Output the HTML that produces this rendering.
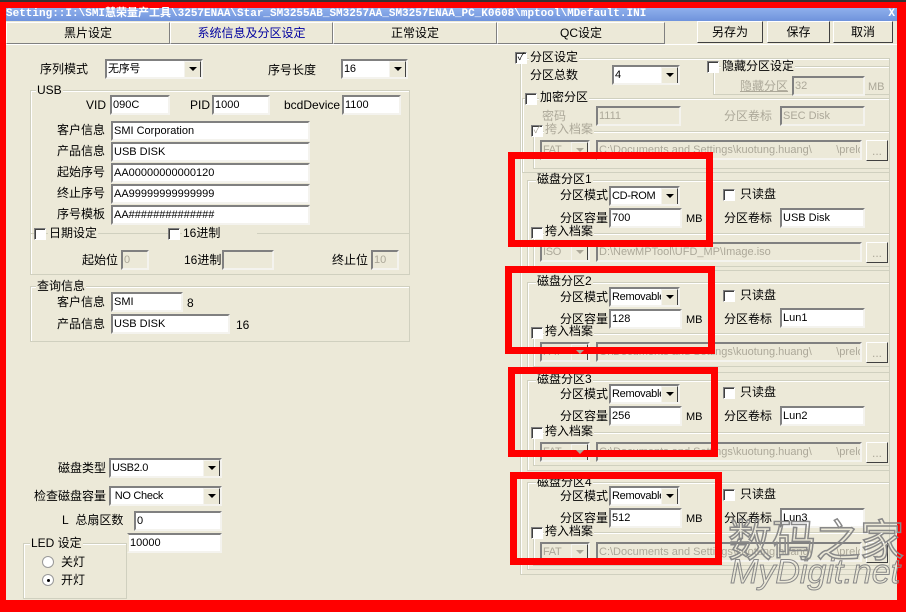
<!DOCTYPE html>
<html><head><meta charset="utf-8">
<style>
*{margin:0;padding:0;box-sizing:border-box}
body{width:906px;height:612px;background:#f00;position:relative;overflow:hidden;font-family:"Liberation Sans","Noto Sans CJK SC",sans-serif;font-size:12px;color:#000}
.a{position:absolute;white-space:nowrap;line-height:14px}
.win{position:absolute;left:6px;top:8px;width:891px;height:592px;background:#ece9d8}
.tb{position:absolute;left:6px;top:8px;width:891px;height:13px;background:linear-gradient(#8fb0ec,#6f93dc);color:#fff;font-family:"Liberation Mono","Noto Sans CJK SC",monospace;font-size:11px;line-height:13px;font-weight:bold;padding-left:0}
.tab{position:absolute;top:22px;height:22px;background:#ece9d8;border:1px solid;border-color:#fff #808080 #808080 #fff;text-align:center;line-height:20px;font-size:12px}
.btn{position:absolute;top:21px;height:22px;background:#ece9d8;border:1px solid;border-color:#fff #404040 #404040 #fff;text-align:center;line-height:20px}
.t{position:absolute;height:20px;background:#fff;border:2px solid;border-color:#808080 #f4f3ee #f4f3ee #808080;font-size:11px;line-height:16px;padding-left:1px;white-space:nowrap;overflow:hidden}
.d{background:#ece9d8;color:#aca899}
.c{position:absolute;height:20px;background:#fff;border:2px solid;border-color:#808080 #f4f3ee #f4f3ee #808080;font-size:11px;line-height:16px;padding-left:1px;white-space:nowrap;overflow:hidden;letter-spacing:-0.3px}
.c::after{content:"";position:absolute;right:0;top:0;width:15px;height:16px;background:#ece9d8;border:1px solid;border-color:#f4f3ee #404040 #404040 #f4f3ee}
.c i{position:absolute;right:4px;top:6px;width:0;height:0;border-left:4px solid transparent;border-right:4px solid transparent;border-top:4px solid #000;z-index:2}
.cd{background:#ece9d8;color:#aca899}
.cd i{border-top-color:#aca899}
.g{position:absolute;border:1px solid #d0d0bf;box-shadow:inset 1px 1px 0 #fff}
.gl{position:absolute;background:#ece9d8;padding:0 1px;line-height:12px;white-space:nowrap}
.cb{position:absolute;width:12px;height:12px;background:#fff;border:1px solid;border-color:#808080 #fff #fff #808080;box-shadow:inset 1px 1px 0 #404040;font-size:10px;line-height:10px;text-align:center}
.rb{position:absolute;width:12px;height:12px;border-radius:50%;background:#fff;border:1px solid #999}
.red{position:absolute;border:7px solid #f00}
.dis{color:#aca899}
.wm{position:absolute;color:transparent;-webkit-text-stroke:1px #fff;white-space:nowrap}
</style></head><body>
<div style="position:absolute;left:0;top:0;width:906px;height:2px;background:#333"></div>
<div class="win"></div>
<div class="tb">Setting::I:\SMI慧荣量产工具\3257ENAA\Star_SM3255AB_SM3257AA_SM3257ENAA_PC_K0608\mptool\MDefault.INI<span style="position:absolute;right:2px">X</span></div>
<div class="tab" style="left:6px;width:164px">黑片设定</div>
<div class="tab" style="left:170px;width:163px;color:#0000a0">系统信息及分区设定</div>
<div class="tab" style="left:333px;width:164px">正常设定</div>
<div class="tab" style="left:497px;width:168px">QC设定</div>
<div class="btn" style="left:697px;width:66px">另存为</div>
<div class="btn" style="left:767px;width:63px">保存</div>
<div class="btn" style="left:833px;width:60px">取消</div>
<div style="position:absolute;left:6px;top:44px;width:891px;height:1px;background:#fff"></div>

<!-- left -->
<div class="a" style="left:40px;top:62px">序列模式</div>
<div class="c" style="left:105px;top:59px;width:98px">无序号<i></i></div>
<div class="a" style="left:268px;top:63px">序号长度</div>
<div class="c" style="left:341px;top:59px;width:67px">16<i></i></div>

<div class="g" style="left:30px;top:90px;width:380px;height:185px"></div>
<div class="gl" style="left:36px;top:84px">USB</div>
<div class="a" style="left:86px;top:98px">VID</div>
<div class="t" style="left:110px;top:95px;width:60px">090C</div>
<div class="a" style="left:190px;top:98px">PID</div>
<div class="t" style="left:212px;top:95px;width:58px">1000</div>
<div class="a" style="left:284px;top:98px">bcdDevice</div>
<div class="t" style="left:342px;top:95px;width:59px">1100</div>
<div class="a" style="left:57px;top:123px">客户信息</div>
<div class="t" style="left:111px;top:121px;width:199px">SMI Corporation</div>
<div class="a" style="left:57px;top:144px">产品信息</div>
<div class="t" style="left:111px;top:142px;width:199px">USB DISK</div>
<div class="a" style="left:57px;top:165px">起始序号</div>
<div class="t" style="left:111px;top:163px;width:199px">AA00000000000120</div>
<div class="a" style="left:57px;top:186px">终止序号</div>
<div class="t" style="left:111px;top:184px;width:199px">AA99999999999999</div>
<div class="a" style="left:57px;top:207px">序号模板</div>
<div class="t" style="left:111px;top:205px;width:199px">AA##############</div>
<div style="position:absolute;left:31px;top:233px;width:378px;height:1px;background:#d0d0bf"></div>
<div class="cb" style="left:34px;top:228px"></div><div class="gl" style="left:48px;top:227px">日期设定</div>
<div class="cb" style="left:168px;top:228px"></div><div class="gl" style="left:182px;top:227px;width:75px">16进制</div>
<div class="a" style="left:82px;top:253px">起始位</div>
<div class="t d" style="left:121px;top:250px;width:28px">0</div>
<div class="a" style="left:184px;top:253px">16进制</div>
<div class="t d" style="left:222px;top:250px;width:52px"></div>
<div class="a" style="left:332px;top:253px">终止位</div>
<div class="t d" style="left:371px;top:250px;width:28px">10</div>

<div class="g" style="left:30px;top:286px;width:380px;height:56px"></div>
<div class="gl" style="left:36px;top:280px">查询信息</div>
<div class="a" style="left:57px;top:295px">客户信息</div>
<div class="t" style="left:111px;top:292px;width:72px">SMI</div>
<div class="a" style="left:187px;top:296px">8</div>
<div class="a" style="left:57px;top:317px">产品信息</div>
<div class="t" style="left:111px;top:314px;width:119px">USB DISK</div>
<div class="a" style="left:236px;top:318px">16</div>

<div class="a" style="left:58px;top:461px">磁盘类型</div>
<div class="c" style="left:109px;top:458px;width:113px">USB2.0<i></i></div>
<div class="a" style="left:34px;top:489px">检查磁盘容量</div>
<div class="c" style="left:109px;top:486px;width:113px">&nbsp;NO Check<i></i></div>
<div class="a" style="left:62px;top:513px">L&nbsp;&nbsp;总扇区数</div>
<div class="t" style="left:134px;top:511px;width:88px">0</div>
<div class="t" style="left:127px;top:533px;width:95px;border-color:#808080 #f4f3ee #f4f3ee #ece9d8">10000</div>
<div class="g" style="left:23px;top:543px;width:104px;height:56px"></div>
<div class="gl" style="left:30px;top:537px">LED 设定</div>
<div class="rb" style="left:42px;top:556px"></div><div class="a" style="left:61px;top:555px">关灯</div>
<div class="rb" style="left:42px;top:574px"></div><div style="position:absolute;left:47px;top:579px;width:3px;height:3px;background:#000;border-radius:50%"></div><div class="a" style="left:61px;top:573px">开灯</div>

<!-- right -->
<div class="g" style="left:520px;top:58px;width:370px;height:517px"></div>
<div class="cb" style="left:515px;top:52px">✓</div><div class="gl" style="left:529px;top:51px">分区设定</div>
<div class="a" style="left:530px;top:68px">分区总数</div>
<div class="c" style="left:612px;top:65px;width:68px">4<i></i></div>
<div class="g" style="left:713px;top:66px;width:177px;height:29px"></div>
<div class="cb" style="left:707px;top:61px"></div><div class="gl" style="left:721px;top:60px">隐藏分区设定</div>
<div class="a dis" style="left:740px;top:79px;text-decoration:underline">隐藏分区</div>
<div class="t d" style="left:792px;top:76px;width:73px">32</div>
<div class="a dis" style="left:868px;top:80px;font-size:11px">MB</div>

<div class="g" style="left:522px;top:98px;width:368px;height:75px"></div>
<div class="cb" style="left:525px;top:93px"></div><div class="gl" style="left:539px;top:91px">加密分区</div>
<div class="a dis" style="left:542px;top:109px">密码</div>
<div class="t d" style="left:596px;top:106px;width:85px">1111</div>
<div class="a dis" style="left:724px;top:109px">分区卷标</div>
<div class="t d" style="left:780px;top:106px;width:85px">SEC Disk</div>
<div class="g" style="left:533px;top:131px;width:357px;height:38px"></div>
<div class="cb" style="left:531px;top:125px;color:#aca899">✓</div><div class="gl dis" style="left:544px;top:123px">挎入档案</div>
<div class="c cd" style="left:540px;top:140px;width:50px">FAT<i></i></div>
<div class="t d" style="left:596px;top:140px;width:266px">C:\Documents and Settings\kuotung.huang\ &nbsp;&nbsp;&nbsp;&nbsp;&nbsp;&nbsp;&nbsp;\preload</div>
<div class="btn" style="left:866px;top:140px;width:22px;height:21px;color:#aca899">...</div>

<!-- partitions -->
<div class="g" style="left:527px;top:180px;width:363px;height:91px"></div>
<div class="gl" style="left:536px;top:173px">磁盘分区1</div>
<div class="a" style="left:560px;top:188px">分区模式</div>
<div class="c" style="left:609px;top:186px;width:71px">CD-ROM<i></i></div>
<div class="cb" style="left:723px;top:189px"></div><div class="a" style="left:740px;top:187px">只读盘</div>
<div class="a" style="left:560px;top:211px">分区容量</div>
<div class="t" style="left:609px;top:208px;width:73px">700</div>
<div class="a" style="left:686px;top:212px;font-size:11px">MB</div>
<div class="a" style="left:724px;top:211px">分区卷标</div>
<div class="t" style="left:780px;top:208px;width:85px">USB Disk</div>
<div class="g" style="left:533px;top:233px;width:357px;height:34px"></div>
<div class="cb" style="left:531px;top:227px"></div><div class="gl" style="left:544px;top:225px">挎入档案</div>
<div class="c cd" style="left:540px;top:242px;width:50px">ISO<i></i></div>
<div class="t d" style="left:596px;top:242px;width:266px">D:\NewMPTool\UFD_MP\Image.iso</div>
<div class="btn" style="left:866px;top:242px;width:22px;height:21px;color:#aca899">...</div>

<div class="g" style="left:527px;top:282px;width:363px;height:91px"></div>
<div class="gl" style="left:536px;top:275px">磁盘分区2</div>
<div class="a" style="left:560px;top:290px">分区模式</div>
<div class="c" style="left:609px;top:287px;width:71px">Removable<i></i></div>
<div class="cb" style="left:723px;top:290px"></div><div class="a" style="left:740px;top:288px">只读盘</div>
<div class="a" style="left:560px;top:312px">分区容量</div>
<div class="t" style="left:609px;top:309px;width:73px">128</div>
<div class="a" style="left:686px;top:313px;font-size:11px">MB</div>
<div class="a" style="left:724px;top:312px">分区卷标</div>
<div class="t" style="left:780px;top:308px;width:85px">Lun1</div>
<div class="g" style="left:533px;top:333px;width:357px;height:34px"></div>
<div class="cb" style="left:531px;top:327px"></div><div class="gl" style="left:544px;top:325px">挎入档案</div>
<div class="c cd" style="left:540px;top:342px;width:50px">FAT<i></i></div>
<div class="t d" style="left:596px;top:342px;width:266px">C:\Documents and Settings\kuotung.huang\ &nbsp;&nbsp;&nbsp;&nbsp;&nbsp;&nbsp;&nbsp;\preload</div>
<div class="btn" style="left:866px;top:342px;width:22px;height:21px;color:#aca899">...</div>

<div class="g" style="left:527px;top:380px;width:363px;height:91px"></div>
<div class="gl" style="left:536px;top:373px">磁盘分区3</div>
<div class="a" style="left:560px;top:387px">分区模式</div>
<div class="c" style="left:609px;top:384px;width:71px">Removable<i></i></div>
<div class="cb" style="left:723px;top:387px"></div><div class="a" style="left:740px;top:385px">只读盘</div>
<div class="a" style="left:560px;top:409px">分区容量</div>
<div class="t" style="left:609px;top:406px;width:73px">256</div>
<div class="a" style="left:686px;top:410px;font-size:11px">MB</div>
<div class="a" style="left:724px;top:409px">分区卷标</div>
<div class="t" style="left:780px;top:406px;width:85px">Lun2</div>
<div class="g" style="left:533px;top:432px;width:357px;height:34px"></div>
<div class="cb" style="left:531px;top:427px"></div><div class="gl" style="left:544px;top:425px">挎入档案</div>
<div class="c cd" style="left:540px;top:442px;width:50px">FAT<i></i></div>
<div class="t d" style="left:596px;top:442px;width:266px">C:\Documents and Settings\kuotung.huang\ &nbsp;&nbsp;&nbsp;&nbsp;&nbsp;&nbsp;&nbsp;\preload</div>
<div class="btn" style="left:866px;top:442px;width:22px;height:21px;color:#aca899">...</div>

<div class="g" style="left:527px;top:482px;width:363px;height:88px"></div>
<div class="gl" style="left:536px;top:476px">磁盘分区4</div>
<div class="a" style="left:560px;top:489px">分区模式</div>
<div class="c" style="left:609px;top:486px;width:71px">Removable<i></i></div>
<div class="cb" style="left:723px;top:489px"></div><div class="a" style="left:740px;top:487px">只读盘</div>
<div class="a" style="left:560px;top:511px">分区容量</div>
<div class="t" style="left:609px;top:508px;width:73px">512</div>
<div class="a" style="left:686px;top:512px;font-size:11px">MB</div>
<div class="a" style="left:724px;top:511px">分区卷标</div>
<div class="t" style="left:780px;top:508px;width:85px">Lun3</div>
<div class="g" style="left:533px;top:532px;width:357px;height:34px"></div>
<div class="cb" style="left:531px;top:527px"></div><div class="gl" style="left:544px;top:525px">挎入档案</div>
<div class="c cd" style="left:540px;top:542px;width:50px">FAT<i></i></div>
<div class="t d" style="left:596px;top:542px;width:266px">C:\Documents and Settings\kuotung.huang\ &nbsp;&nbsp;&nbsp;&nbsp;&nbsp;&nbsp;&nbsp;\preload</div>
<div class="btn" style="left:866px;top:542px;width:22px;height:21px;color:#aca899">...</div>

<!-- red boxes -->
<div class="red" style="left:508px;top:152px;width:205px;height:95px"></div>
<div class="red" style="left:505px;top:266px;width:210px;height:88px"></div>
<div class="red" style="left:508px;top:367px;width:210px;height:90px"></div>
<div class="red" style="left:510px;top:472px;width:212px;height:93px"></div>

<!-- watermark -->
<div class="wm" style="left:728px;top:512px;font-size:44px;line-height:50px;font-family:'Noto Sans CJK SC',sans-serif;-webkit-text-stroke:1.5px #888">数码之家</div>
<div class="wm" style="left:730px;top:552px;font-size:34px;line-height:40px;font-style:italic;-webkit-text-stroke:1px #888">MyDigit.net</div>
</body></html>
